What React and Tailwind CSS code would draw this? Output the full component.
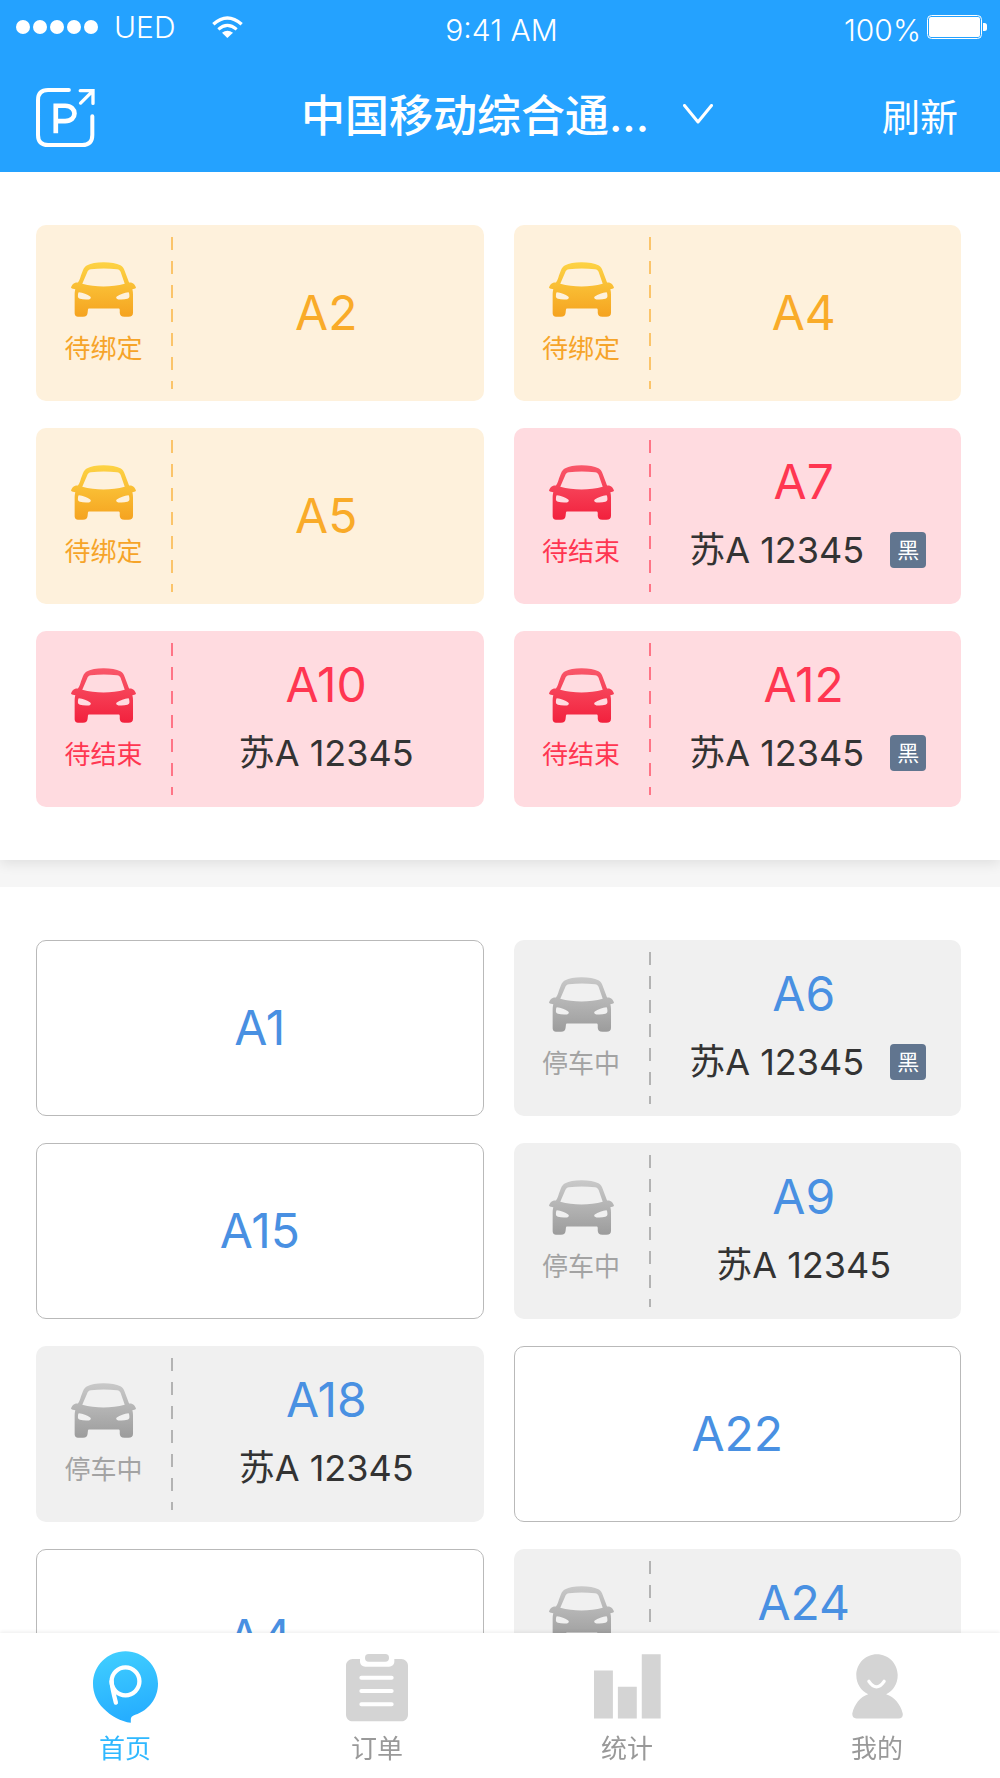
import { useState } from "react";
import clsx from "clsx";

const STATUS = {
  bind: {
    label: "待绑定",
    card: "bg-[#fef1dc]",
    text: "text-[#f6a429]",
    number: "text-[#f9ab29]",
    line: "bg-[repeating-linear-gradient(to_bottom,#fbc46a_0_13px,transparent_13px_24px)]",
    from: "#fdd344",
    to: "#f5a320",
  },
  end: {
    label: "待结束",
    card: "bg-[#ffdbe0]",
    text: "text-[#ff3651]",
    number: "text-[#ff3651]",
    line: "bg-[repeating-linear-gradient(to_bottom,#ff7486_0_13px,transparent_13px_24px)]",
    from: "#f9586a",
    to: "#f2213d",
  },
  parking: {
    label: "停车中",
    card: "bg-[#f0f0f0]",
    text: "text-[#a3a3a3]",
    number: "text-[#4990e2]",
    line: "bg-[repeating-linear-gradient(to_bottom,#b3b3b3_0_13px,transparent_13px_24px)]",
    from: "#c9c9c9",
    to: "#9c9c9c",
  },
};

const pending = [
  { id: "A2", status: "bind" },
  { id: "A4", status: "bind" },
  { id: "A5", status: "bind" },
  { id: "A7", status: "end", plate: "苏A 12345", black: true },
  { id: "A10", status: "end", plate: "苏A 12345" },
  { id: "A12", status: "end", plate: "苏A 12345", black: true },
];

const spaces = [
  { id: "A1" },
  { id: "A6", status: "parking", plate: "苏A 12345", black: true },
  { id: "A15" },
  { id: "A9", status: "parking", plate: "苏A 12345" },
  { id: "A18", status: "parking", plate: "苏A 12345" },
  { id: "A22" },
  { id: "A4" },
  { id: "A24", status: "parking", plate: "苏A 12345" },
];

const CarIcon = ({ status }) => {
  const { from, to } = STATUS[status];
  return (
    <svg viewBox="0 0 196 164" className="h-[55px] w-[65px]" aria-hidden="true">
      <defs>
        <linearGradient id={`car-${status}`} x1="0" y1="0" x2="0" y2="1">
          <stop offset="0" stopColor={from} />
          <stop offset="1" stopColor={to} />
        </linearGradient>
      </defs>
      <path
        fill={`url(#car-${status})`}
        fillRule="evenodd"
        d="M98 0C120 0 137 3 149 9C156 13 159 18 162 26L175 61C184 60 193 64 196 77C193 80 189 81 185 81C187 88 187 94 187 101V152C187 160 183 164 173 164H161C151 164 148 160 147 153V144C147 141 146 139 143 139H55C52 139 51 141 51 144L50 153C49 160 46 164 36 164H24C14 164 11 160 11 152V101C11 94 11 88 13 81C8 81 4 80 0 77C3 64 12 60 21 61C26 54 28 47 30 40L36 24C39 17 43 12 49 9C60 3 76 0 98 0ZM60 21C54 22 51 25 49 30L34 65C54 71 76 73 98 73C120 73 142 71 162 65L150 30C148 25 145 22 139 21C112 18 86 18 60 21ZM24 90C35 91 50 97 58 103C62 107 59 111 54 112C43 113 34 112 27 110C22 108 20 104 21 99C21 95 22 90 24 90ZM173 90C175 90 176 95 176 99C177 104 175 108 170 110C163 112 154 113 143 112C138 111 134 107 138 103C147 97 162 91 173 90Z"
      />
    </svg>
  );
};

const SpaceCard = ({ space }) => {
  if (!space.status) {
    return (
      <button
        type="button"
        className="flex h-44 items-center justify-center rounded-[10px] border border-[#b9b9b9] bg-white text-5xl text-[#4990e2]"
      >
        {space.id}
      </button>
    );
  }

  const style = STATUS[space.status];
  return (
    <button type="button" className={clsx("flex h-44 rounded-[10px]", style.card)}>
      <span className="flex h-full w-[135px] flex-col items-center pt-[37px]">
        <CarIcon status={space.status} />
        <span className={clsx("mt-3 text-[26px] leading-10", style.text)}>
          {style.label}
        </span>
      </span>
      <span className={clsx("my-3 w-[2px] self-stretch", style.line)} />
      <span className="flex h-full flex-1 flex-col items-center justify-center pr-1">
        <span className={clsx("text-5xl leading-[60px]", style.number)}>{space.id}</span>
        {space.plate && (
          <span
            className={clsx(
              "mt-2 flex items-center gap-[26px] text-4xl leading-[60px] text-[#333]",
              space.black && "pl-2"
            )}
          >
            {space.plate}
            {space.black && (
              <span className="flex size-9 items-center justify-center rounded-[4px] bg-[#61758f] text-[22px] leading-none text-white">
                黑
              </span>
            )}
          </span>
        )}
      </span>
    </button>
  );
};

const SpaceGrid = ({ items }) => (
  <div className="grid grid-cols-2 gap-x-[30px] gap-y-[27px] pr-[39px] pl-9">
    {items.map((space, index) => (
      <SpaceCard key={index} space={space} />
    ))}
  </div>
);

const StatusBar = () => (
  <div className="grid h-[54px] grid-cols-[1fr_auto_1fr] items-center pr-[13px] pl-4 text-[30px] font-light">
    <div className="flex items-center">
      <div className="flex gap-[3px]">
        {[0, 1, 2, 3, 4].map((dot) => (
          <span key={dot} className="size-[14px] rounded-full bg-white" />
        ))}
      </div>
      <span className="ml-4">UED</span>
      <svg viewBox="0 0 93 66" className="ml-9 h-[22px] w-[31px]" aria-hidden="true">
        <path d="M4 25Q46-13 89 25" fill="none" stroke="#fff" strokeWidth="10" />
        <path d="M19 40Q46 16 74 40" fill="none" stroke="#fff" strokeWidth="9" />
        <path d="M30 50Q46 38 63 50L46 66Z" fill="#fff" />
      </svg>
    </div>
    <div className="pt-[6px] text-center">9:41 AM</div>
    <div className="flex items-center justify-end">
      <span className="pt-[6px]">100%</span>
      <svg viewBox="0 0 60 24" className="ml-[6px] h-6 w-[60px]" aria-hidden="true">
        <rect x="0.5" y="0.5" width="54" height="23" rx="4" fill="none" stroke="#fff" />
        <rect x="2" y="2" width="51" height="20" rx="2" fill="#fff" />
        <path d="M56 8h1.500q2.500 0 2.500 2.500v3q0 2.500-2.500 2.500H56Z" fill="#fff" />
      </svg>
    </div>
  </div>
);

const HomeIcon = () => (
  <svg viewBox="0 0 196 216" className="h-[72px] w-[65px]" aria-hidden="true">
    <defs>
      <linearGradient id="home-fill" x1="0" y1="0" x2="0.200" y2="1">
        <stop offset="0" stopColor="#42d0ff" />
        <stop offset="1" stopColor="#26aeff" />
      </linearGradient>
    </defs>
    <path
      fill="url(#home-fill)"
      d="M98 0C152 0 196 44 196 98C196 142 168 178 127 192C117 196 114 199 114 206V216C84 212 54 196 31 172C11 152 0 126 0 98C0 44 44 0 98 0Z"
    />
    <circle cx="98" cy="91" r="42" fill="none" stroke="#fff" strokeWidth="13" />
    <path d="M56 91Q57 109 69 155" fill="none" stroke="#fff" strokeWidth="13" strokeLinecap="round" />
  </svg>
);

const OrderIcon = () => (
  <svg viewBox="0 0 186 216" className="h-[72px] w-[62px]" aria-hidden="true">
    <path
      fill="#d4d4d4"
      d="M20 24H42V31C42 41 49 47 58 47H129C138 47 145 41 145 31V24H166C177 24 186 33 186 44V191C186 202 177 211 166 211H20C9 211 0 202 0 191V44C0 33 9 24 20 24Z"
    />
    <rect x="57" y="9" width="72" height="23" rx="11" fill="#d4d4d4" />
    <path d="M46 80H137M46 120H137M46 160H137" stroke="#fff" strokeWidth="12" strokeLinecap="round" />
  </svg>
);

const StatsIcon = () => (
  <svg viewBox="0 0 202 216" className="h-[72px] w-[67px]" aria-hidden="true">
    <path fill="#d4d4d4" d="M0 58H57V203H0ZM72 107H129V203H72ZM144 9H201V203H144Z" />
  </svg>
);

const MineIcon = () => (
  <svg viewBox="0 0 154 216" className="h-[72px] w-[51px]" aria-hidden="true">
    <path
      fill="#d4d4d4"
      d="M75 9C110 9 138 37 138 72C138 98 125 120 103 130C128 138 146 160 153 187C155 197 150 203 141 203H13C4 203 0 197 1 187C8 160 24 138 49 130C27 120 13 98 13 72C13 37 41 9 75 9Z"
    />
    <path d="M51 91Q74 124 97 91" fill="none" stroke="#fff" strokeWidth="10" strokeLinecap="round" />
  </svg>
);

const tabs = [
  { key: "home", label: "首页", icon: HomeIcon },
  { key: "order", label: "订单", icon: OrderIcon },
  { key: "stats", label: "统计", icon: StatsIcon },
  { key: "mine", label: "我的", icon: MineIcon },
];

const App = () => {
  const [active, setActive] = useState("home");

  return (
    <div className="flex h-screen flex-col bg-white font-['Inter','Noto_Sans_CJK_SC',sans-serif]">
      <header className="shrink-0 bg-[#24a2ff] text-white">
        <StatusBar />
        <div className="grid h-[118px] grid-cols-[1fr_auto_1fr] items-center pt-2 pr-[42px] pl-9">
          <button type="button" aria-label="切换车场" className="justify-self-start">
            <svg viewBox="0 0 176 176" className="size-[59px]" fill="none" stroke="#fff" aria-hidden="true">
              <path
                d="M98 6H36Q6 6 6 36V140Q6 170 36 170H138Q168 170 168 140V84"
                strokeWidth="12"
                strokeLinecap="round"
              />
              <path d="M59 135V53H87C124 53 124 99 87 99H59" strokeWidth="14" />
              <path d="M132 8H170V46M168 10L133 45" strokeWidth="10" strokeLinecap="round" />
            </svg>
          </button>
          <button type="button" className="flex items-center pb-[2px] pl-5 text-[44px] font-medium">
            中国移动综合通...
            <svg viewBox="0 0 30 20" className="mb-1 ml-[34px] h-5 w-[30px]" fill="none" stroke="#fff" aria-hidden="true">
              <path d="M1.500 1.500L15 18L28.500 1.500" strokeWidth="3" strokeLinecap="round" strokeLinejoin="round" />
            </svg>
          </button>
          <button type="button" className="justify-self-end text-[38px]">
            刷新
          </button>
        </div>
      </header>

      <main className="min-h-0 flex-1 overflow-y-auto bg-[#f6f6f6] [scrollbar-width:none]">
        <section className="bg-white py-[53px] shadow-[0_4px_12px_rgba(0,0,0,0.09)]">
          <SpaceGrid items={pending} />
        </section>
        <section className="mt-[27px] bg-white py-[53px]">
          <SpaceGrid items={spaces} />
        </section>
      </main>

      <nav className="relative grid h-[145px] shrink-0 grid-cols-4 bg-white shadow-[0_-1px_4px_rgba(0,0,0,0.08)]">
        {tabs.map(({ key, label, icon: Icon }) => (
          <a
            key={key}
            href={`#${key}`}
            onClick={() => setActive(key)}
            className={clsx(
              "flex flex-col items-center pt-[18px] text-[26px] leading-10",
              active === key ? "text-[#2fb8ff]" : "text-[#999]",
              key !== "home" && "pl-1"
            )}
          >
            <Icon />
            <span className="mt-[6px]">{label}</span>
          </a>
        ))}
      </nav>
    </div>
  );
};

export default App;
